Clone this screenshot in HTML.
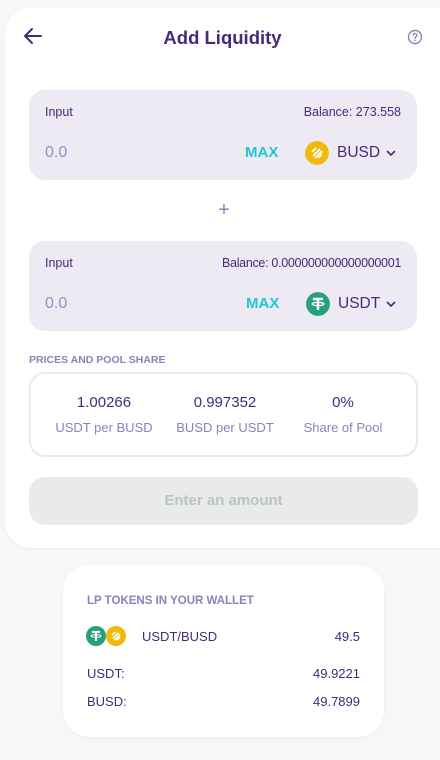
<!DOCTYPE html>
<html><head><style>
*{box-sizing:border-box;margin:0;padding:0}
body{width:440px;height:760px;background:#f7f7f8;font-family:"Liberation Sans",sans-serif;color:#452a7a;position:relative;overflow:hidden}
.card{position:absolute;left:5px;top:8px;width:460px;height:540px;background:#fff;border-radius:26px;box-shadow:0 1px 3px rgba(0,0,0,.05)}
.abs{position:absolute}
.box{position:absolute;left:29px;width:388px;height:90px;background:#eeeaf4;border-radius:16px}
.lbl{position:absolute;top:15px;font-size:12.5px;color:#452a7a}
.zero{position:absolute;left:16px;top:54px;font-size:16px;color:#9a8dc2}
.max{position:absolute;top:54px;font-size:15px;font-weight:bold;color:#1fc7d4}
.tok{position:absolute;top:51px;font-size:15.5px;display:flex;align-items:center}
.ic{width:24px;height:24px;border-radius:50%;display:inline-block;margin-right:8px}
.col{position:absolute;top:20px;width:120px;text-align:center}
.col .v{font-size:15px;color:#452a7a}
.col .s{font-size:13px;color:#8f80ba;margin-top:9px}
.lp{position:absolute;left:63px;top:565px;width:321px;height:172px;background:#fff;border-radius:26px;box-shadow:0 1px 3px rgba(0,0,0,.05)}
.row{position:absolute;left:24px;right:24px;font-size:13px;display:flex;justify-content:space-between}
.chev{margin-left:6px}
</style></head><body>
<div class="card"></div>
<svg class="abs" style="left:23px;top:27px" width="20" height="18" viewBox="0 0 20 18"><path d="M18 9H3M9 2L2 9l7 7" fill="none" stroke="#452a7a" stroke-width="2" stroke-linecap="round" stroke-linejoin="round"/></svg>
<div class="abs" style="left:0;width:445px;top:27px;text-align:center;font-size:18.5px;font-weight:bold">Add Liquidity</div>
<svg class="abs" style="left:407px;top:29px" width="16" height="16" viewBox="0 0 16 16"><circle cx="8" cy="8" r="6.5" fill="none" stroke="#8f80ba" stroke-width="1.4"/><path d="M6.2 6.3a1.8 1.8 0 1 1 2.4 1.7c-.5.2-.6.5-.6 1v.4" fill="none" stroke="#8f80ba" stroke-width="1.3" stroke-linecap="round"/><circle cx="8" cy="11.3" r=".8" fill="#8f80ba"/></svg>

<div class="box" style="top:90px">
<div class="lbl" style="left:16px">Input</div>
<div class="lbl" style="right:16px">Balance: 273.558</div>
<div class="zero">0.0</div>
<div class="max" style="left:216px">MAX</div>
<div class="tok" style="left:276px"><svg class="ic" viewBox="0 0 24 24"><circle cx="12" cy="12" r="12" fill="#f0b90b"/><path d="M7 11l4-4M8 15l7-7M10 17l7-7M13 17l4-4" stroke="#fff" stroke-width="1.8"/></svg>BUSD<svg class="chev" width="10" height="7" viewBox="0 0 10 7"><path d="M1.5 1.5L5 5l3.5-3.5" fill="none" stroke="#452a7a" stroke-width="1.6" stroke-linecap="round"/></svg></div>
</div>
<div class="abs" style="left:0;width:448px;top:199px;text-align:center;font-size:20px;color:#8f80ba">+</div>
<div class="box" style="top:241px">
<div class="lbl" style="left:16px">Input</div>
<div class="lbl" style="right:16px;font-size:12.5px;letter-spacing:-0.3px">Balance: 0.000000000000000001</div>
<div class="zero">0.0</div>
<div class="max" style="left:217px">MAX</div>
<div class="tok" style="left:277px"><svg class="ic" viewBox="0 0 24 24"><circle cx="12" cy="12" r="12" fill="#26a17b"/><path d="M7 7h10M12 7v11" stroke="#fff" stroke-width="2.4"/><ellipse cx="12" cy="12" rx="6" ry="1.6" fill="none" stroke="#fff" stroke-width="1.2"/></svg>USDT<svg class="chev" width="10" height="7" viewBox="0 0 10 7"><path d="M1.5 1.5L5 5l3.5-3.5" fill="none" stroke="#452a7a" stroke-width="1.6" stroke-linecap="round"/></svg></div>
</div>
<div class="abs" style="left:29px;top:354px;font-size:10.5px;font-weight:bold;color:#8f80ba">PRICES AND POOL SHARE</div>
<div class="abs" style="left:29px;top:372px;width:389px;height:85px;border:2px solid #e9eaeb;border-radius:16px">
<div class="col" style="left:13px"><div class="v">1.00266</div><div class="s">USDT per BUSD</div></div>
<div class="col" style="left:134px"><div class="v">0.997352</div><div class="s">BUSD per USDT</div></div>
<div class="col" style="left:252px"><div class="v">0%</div><div class="s">Share of Pool</div></div>
</div>
<div class="abs" style="left:29px;top:477px;width:389px;height:48px;background:#e9eaeb;border-radius:16px;text-align:center;line-height:48px;font-size:15px;font-weight:bold;color:#bdc2c4">Enter an amount</div>

<div class="lp">
<div class="abs" style="left:24px;top:30px;font-size:11.5px;font-weight:bold;color:#8f80ba">LP TOKENS IN YOUR WALLET</div>
<div class="abs" style="left:23px;top:61px;display:flex"><svg width="20" height="20" viewBox="0 0 24 24"><circle cx="12" cy="12" r="12" fill="#26a17b"/><path d="M7 7h10M12 7v11" stroke="#fff" stroke-width="2.4"/><ellipse cx="12" cy="12" rx="6" ry="1.6" fill="none" stroke="#fff" stroke-width="1.2"/></svg><svg width="20" height="20" viewBox="0 0 24 24"><circle cx="12" cy="12" r="12" fill="#f0b90b"/><path d="M7 11l4-4M8 15l7-7M10 17l7-7M13 17l4-4" stroke="#fff" stroke-width="1.8"/></svg></div>
<div class="row" style="top:64px"><span style="margin-left:55px">USDT/BUSD</span><span>49.5</span></div>
<div class="row" style="top:101px"><span>USDT:</span><span>49.9221</span></div>
<div class="row" style="top:129px"><span>BUSD:</span><span>49.7899</span></div>
</div>
</body></html>
